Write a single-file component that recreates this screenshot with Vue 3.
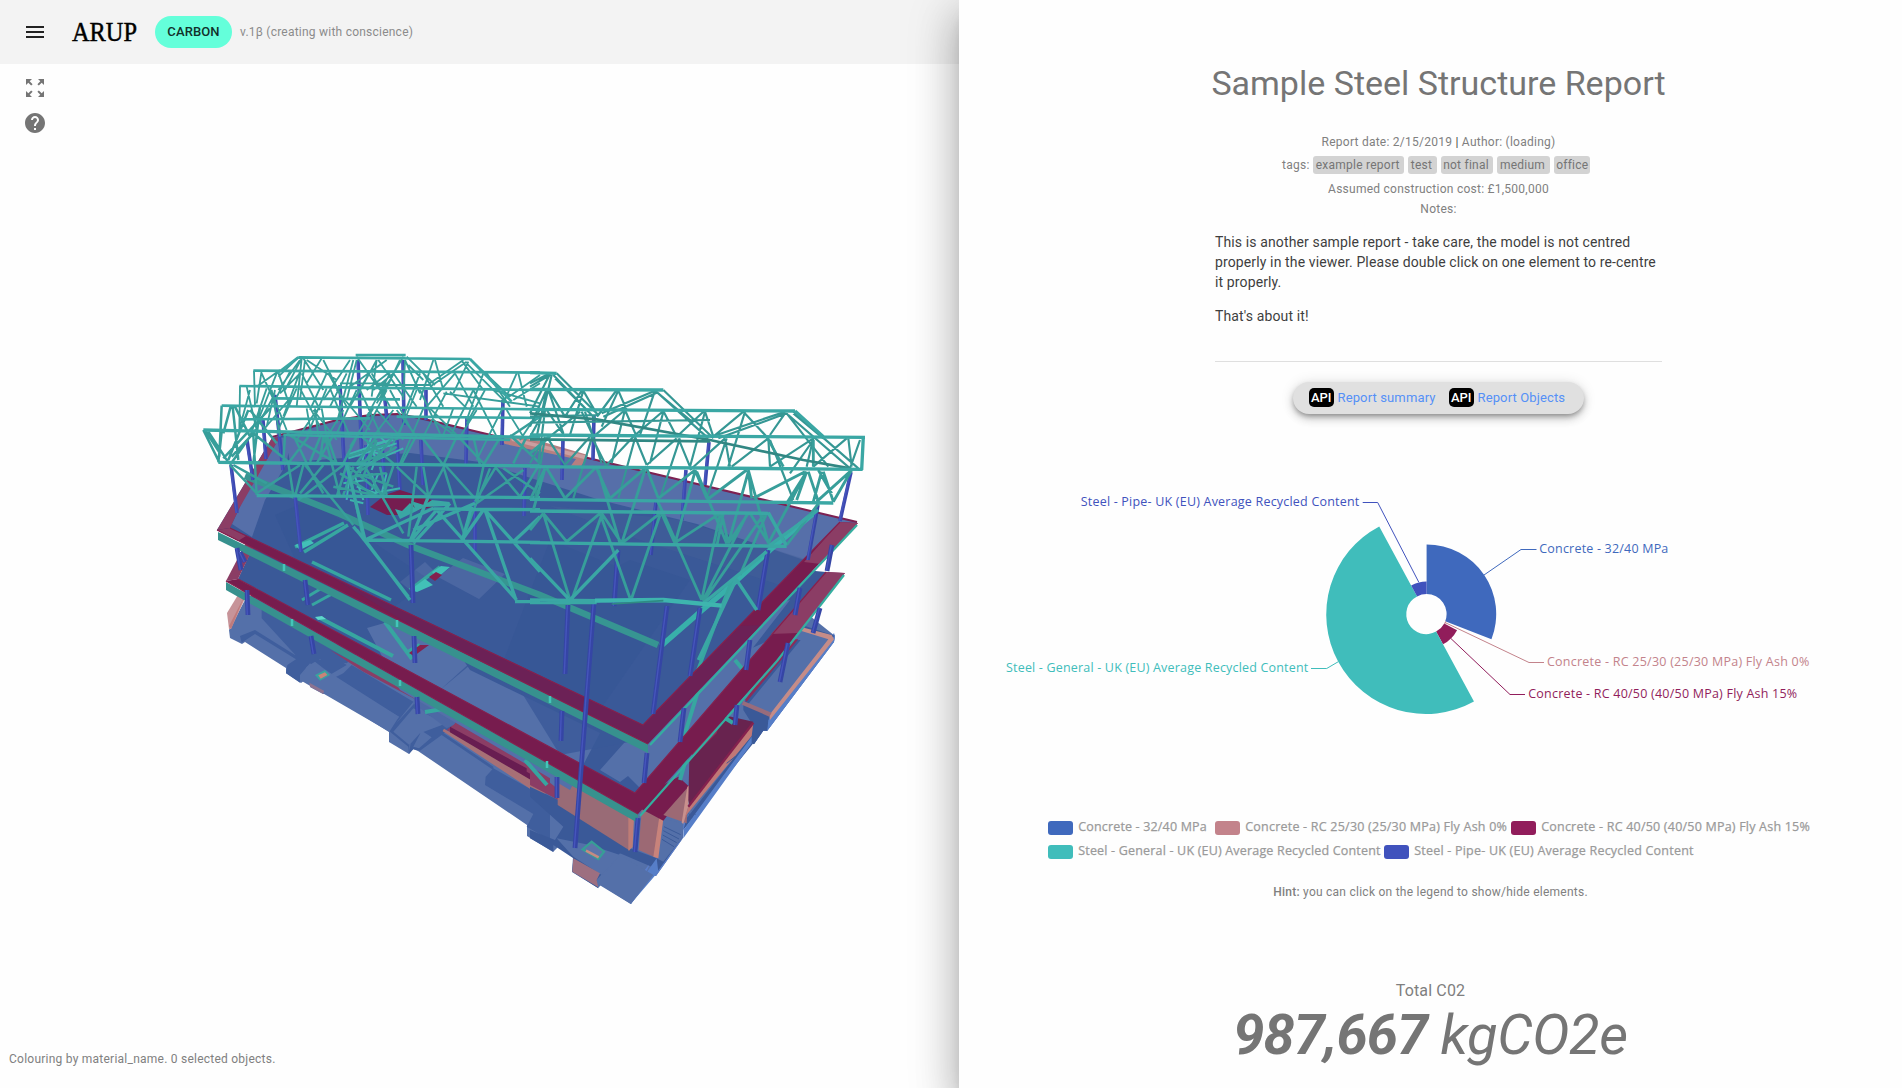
<script setup>
const cx = 1426.6
const cy = 614
const point = (r, deg) => {
  const a = (deg * Math.PI) / 180
  return `${(cx + r * Math.sin(a)).toFixed(2)} ${(cy - r * Math.cos(a)).toFixed(2)}`
}
const arc = (from, to, r) => {
  const large = to - from > 180 ? 1 : 0
  return `M${point(20, from)}L${point(r, from)}A${r} ${r} 0 ${large} 1 ${point(r, to)}L${point(20, to)}A20 20 0 ${large} 0 ${point(20, from)}Z`
}
const slices = [
  { name: 'Concrete - 32/40 MPa', color: '#3f69bd', from: 0, to: 111.3, r: 69.6, line: '1484,575 1521,549.5 1536.5,549.5', x: 1539.3, y: 553.3, w: 129, lx: 1048, ly: 821, lw: 128.5 },
  { name: 'Concrete - RC 25/30 (25/30 MPa) Fly Ash 0%', color: '#c3838b', from: 111.3, to: 118, r: 21, line: '1445,622.5 1529,662.5 1544,662.5', x: 1547, y: 666.3, w: 262.3, lx: 1215, ly: 821, lw: 261.7 },
  { name: 'Concrete - RC 40/50 (40/50 MPa) Fly Ash 15%', color: '#911d5b', from: 118, to: 151.6, r: 34.5, line: '1450.7,638.3 1510,694.5 1525,694.5', x: 1528.2, y: 698.3, w: 269, lx: 1511, ly: 821, lw: 268.6 },
  { name: 'Steel - General - UK (EU) Average Recycled Content', color: '#40bdbb', from: 151.6, to: 331.6, r: 99.6, line: '1338.3,661.7 1326.7,668.5 1311,668.5', x: 1006, y: 672.3, w: 302.3, lx: 1048, ly: 845, lw: 302.3 },
  { name: 'Steel - Pipe- UK (EU) Average Recycled Content', color: '#4052bd', from: 331.6, to: 360, r: 32.5, line: '1418.7,582 1377.7,502.5 1362.7,502.5', x: 1080.7, y: 506.3, w: 278.6, lx: 1384, ly: 845, lw: 279.3 }
]
const tags = ['example report', 'test', 'not final', 'medium', 'office']

// Truss members, far roof bays
const westThin = `M325 52L265 110M335 55L285 150M340 55L400 150M350 60L440 120M395 55L350 130M400 60L450 160M480 60L400 180M490 60L440 250M500 50L570 150M560 60L500 170M565 60L640 170M590 60L480 140M640 50L560 190M645 60L690 160M650 50L735 135M655 75L700 120M730 60L690 180M735 60L760 150M820 60L720 130M830 65L720 140M835 65L790 160M815 62L880 150M840 57L960 170M830 70L945 185M795 100L710 200M795 100L850 200M880 100L830 240M885 150L830 250M890 100L960 200M980 100L940 190M985 100L1010 200M1050 105L950 175M1050 130L970 180
M192 92L195 200M215 92L200 190M215 100L260 200M262 95L205 240M265 98L300 200M300 95L250 190M330 95L280 230M335 100L390 210M410 100L360 210M415 100L470 200M470 100L420 200M540 95L480 200M545 100L600 200M600 100L530 230M610 100L680 200M690 100L640 230M700 100L760 200
M150 138L148 270M170 140L200 270M180 150L150 260M230 145L180 290M240 145L290 270M255 150L230 260M320 145L260 280M330 145L390 260M410 145L350 290M420 145L480 290M500 150L440 280M510 150L570 280M590 150L520 290M600 150L670 280M680 150L620 300M690 150L750 280M770 155L700 290M850 150L780 290M850 150L920 290M940 200L860 360M950 210L1000 290M1050 210L990 300
M300 175L220 270M380 210L320 300M370 210L440 300M460 210L400 310M550 205L480 320M560 210L640 300M650 230L600 330M730 240L800 290M860 210L810 290M910 150L1050 190M760 160L1050 200
M335 55L320 200M345 60L330 180M200 140L270 90M265 150L330 60M500 60L470 180M545 170L560 60M575 175L630 60M640 180L645 60M450 130L590 130M480 145L560 145M560 135L720 135M255 160L185 290M245 150L270 290M270 160L330 100M350 205L365 290M375 205L385 290M395 205L410 290M440 150L540 270M530 150L600 95M550 150L610 100M600 120L560 175M610 210L550 290M620 210L680 290M700 205L630 370M720 205L800 285M780 155L830 205M790 205L760 285`
const westMid = `M95 197L88 350M122 200L100 280M128 200L145 360M135 200L180 290M175 210L115 360M180 210L260 310M210 200L190 370M40 270L88 367M55 275L115 367M95 275L85 367M45 270L90 340M190 275L120 375M190 280L125 350M190 285L200 465M190 280L295 365M240 205L100 355M285 285L280 365M290 280L440 370M310 285L350 370M355 290L295 370M395 280L360 365M410 285L440 370M430 285L380 370M500 290L460 370M515 290L610 370M560 290L500 370M610 290L545 370M680 285L635 370M690 285L760 375M800 290L760 375M805 290L885 375M850 290L870 375M935 285L880 375M960 285L1050 370M1010 290L970 370M1050 230L960 290
M120 375L205 465M130 375L230 430M295 370L310 465M330 375L200 460M340 375L315 470M345 375L490 555M350 375L400 460M400 375L330 460M460 375L325 480M470 375L440 470M475 380L520 600M470 375L580 465M490 380L460 465M525 380L640 580M570 380L590 465M610 378L580 465M620 380L715 470M680 380L655 590M700 380L715 470M765 375L715 470M765 375L850 470M760 380L825 590M880 380L860 470M915 385L855 485M915 380L990 470M900 385L820 590M1000 390L860 490M1050 370L990 470M940 385L1050 460
M400 290L390 360M405 290L450 470M590 340L500 370M600 310L470 350M620 320L500 400M560 300L520 410M550 330L480 430M450 400L560 470M480 410L590 400M500 400L610 440M430 440L580 470`
const westStair = 'M470 345L600 300M475 355L620 310M500 385L640 325M530 300L560 360M545 290L520 350M570 290L600 320M560 310L610 300M480 400L470 480M495 410L520 480M460 430L530 420M500 440L560 460M545 400L560 460M565 400L545 450M590 400L575 460M480 480L520 490M560 350L545 390M520 350L510 400M535 330L590 350M550 460L630 445'
const westHeavy = `M40 270L1050 293M85 367L1050 378M200 467L1050 473M730 507L1050 509M525 600L1050 607M470 375L525 600M740 510L660 605M730 505L525 600M780 490L670 610M740 510L980 780M880 510L820 595M885 510L978 780M885 510L970 605M1050 530L970 605M970 605L1050 695M525 600L660 780M490 560L525 600M855 490L670 570M975 785L1050 785M845 500L820 590M715 470L660 605M500 570L655 770`
const westChord = 'M325 52L840 57M497 45L647 45M497 54L647 54M190 92L1050 98M148 138L1050 150M95 197L1050 208M250 175L630 178M150 238L540 235M620 230L1050 234M280 285L960 300M325 52L262 100M840 57L965 185'

const eastThin = `M0 70L60 40M0 80L55 48M60 42L0 160M65 45L40 150M70 45L190 170M80 40L205 165M75 55L200 180M50 88L0 200M55 88L105 170M50 90L20 230M55 90L100 220M155 92L105 170M160 92L205 170M160 92L120 225M260 90L205 165M265 92L290 150M265 92L215 200M375 92L215 160M380 98L220 170M375 92L330 225M375 92L480 180M400 90L550 235M385 100L535 235
M45 150L0 230M50 150L105 230M45 150L25 310M150 155L60 230M155 155L190 230M165 155L215 310M285 150L190 230M285 150L320 230M285 150L245 310M400 153L310 230M400 153L440 230M400 155L360 310M520 155L440 230M525 155L550 230M525 155L480 320M640 155L550 230M640 155L710 230M645 155L595 320M765 155L560 225M770 160L565 235M765 160L720 225M770 160L895 320M790 155L985 325M775 165L960 325M790 160L880 235
M45 230L0 310M50 230L105 315M45 232L15 415M180 230L105 315M185 230L230 320M185 235L130 415M310 230L225 320M315 230L350 315M315 235L265 415M440 235L350 315M445 235L480 320M450 235L390 415M585 235L480 330M585 235L600 320M590 235L530 415M715 235L605 320M715 235L720 320M720 240L790 420M850 235L720 320M850 235L830 320M850 240L780 340M950 235L850 320M955 235L965 320M990 240L960 325M0 170L200 165M0 188L540 180`
const eastMid = `M45 325L0 420M50 325L105 415M45 325L10 450M195 325L105 415M200 325L240 415M205 330L270 550M345 325L240 415M350 325L385 415M345 330L275 550M495 330L385 415M495 330L530 415M495 335L435 550M500 335L590 550M650 330L530 420M655 330L665 415M655 335L595 550M655 330L715 550M825 335L670 415M830 335L800 420M835 335L865 425M850 240L850 320M875 335L850 425M880 335L910 425M965 330L910 425M960 335L860 425M830 335L715 550M830 335L770 430M865 330L905 400M380 418L400 460M870 425L770 555M0 280L60 230M710 230L760 320
M40 460L0 510M40 460L110 545M40 460L120 720M210 460L110 545M215 460L275 550M215 465L125 720M210 460L300 715M390 460L275 550M395 460L435 550M400 460L515 720M390 465L305 715M570 460L440 545M575 460L595 550M570 465L515 720M655 460L595 550M660 460L720 555M650 465L520 720M715 460L770 555M710 460L630 645M700 465L520 725M580 460L560 560`
const eastHeavy = 'M0 148L795 153M0 225L1005 232M0 320L998 328M0 418L910 429M0 453L715 460M0 548L770 559M0 88L400 90M0 38L80 40M795 153L885 235M1000 230L995 330M715 458L768 555M0 595L115 715M120 720L265 570M710 575L520 730M865 450L720 555M620 655L505 900M620 660L680 750M0 720L210 722M0 728L200 728'

const columns = [
  [231, 465, 237, 513], [247, 440, 253, 480], [263, 420, 266, 459], [275, 395, 283, 470], [295, 495, 301, 552], [340, 385, 344, 460], [358, 360, 362, 460], [403, 360, 404, 425], [385, 400, 387, 420],
  [346, 455, 347, 500], [366, 445, 368, 515], [382, 445, 385, 490], [397, 440, 400, 490], [421, 440, 423, 485], [426, 390, 426, 420], [467, 416, 466, 465], [503, 400, 502, 445], [525, 468, 524, 516], [475, 500, 475, 555],
  [237, 548, 241, 570], [240, 552, 245, 562], [247, 590, 248, 615], [305, 580, 308, 605],
  [563, 440, 562, 480], [594, 415, 593, 460], [709, 442, 705, 485], [686, 470, 682, 520], [656, 502, 651, 555], [618, 550, 614, 606], [851, 472, 840, 521], [818, 505, 808, 560], [768, 550, 758, 610],
  [411, 545, 413, 603], [311, 636, 314, 654], [414, 636, 415, 663], [417, 697, 418, 714], [568, 605, 565, 674], [562, 711, 561, 741], [667, 606, 653, 714], [700, 608, 690, 676],
  [832, 545, 827, 571], [800, 588, 795, 615], [820, 608, 813, 633], [750, 640, 746, 670], [788, 643, 780, 682], [737, 705, 735, 725], [684, 708, 680, 742], [647, 753, 644, 783], [557, 777, 557, 798], [638, 818, 635, 852], [594, 602, 575, 848]
]
</script>

<template>
  <div class="page">
    <section class="viewer">
      <header class="toolbar">
        <svg class="menu" width="24" height="24" viewBox="0 0 24 24"><path d="M3 18h18v-2H3v2zm0-5h18v-2H3v2zm0-7v2h18V6H3z" /></svg>
        <svg class="logo" width="68" height="40" viewBox="0 0 68 40">
          <text x="1" y="29.3" textLength="65" lengthAdjust="spacingAndGlyphs">ARUP</text>
        </svg>
        <span class="chip">CARBON</span>
        <span class="version">v.1β (creating with conscience)</span>
      </header>
      <nav class="tools">
        <svg width="24" height="24" viewBox="0 0 24 24"><path d="M15 3l2.3 2.3-2.89 2.87 1.42 1.42L18.7 6.7 21 9V3h-6zM3 9l2.3-2.3 2.87 2.89 1.42-1.42L6.7 5.3 9 3H3v6zm6 12l-2.3-2.3 2.89-2.87-1.42-1.42L5.3 17.3 3 15v6h6zm12-6l-2.3 2.3-2.87-2.89-1.42 1.42 2.89 2.87L15 21h6v-6z" /></svg>
        <svg width="24" height="24" viewBox="0 0 24 24"><path d="M12 2C6.48 2 2 6.48 2 12s4.48 10 10 10 10-4.48 10-10S17.52 2 12 2zm1 17h-2v-2h2v2zm2.07-7.75l-.9.92C13.45 12.9 13 13.5 13 15h-2v-.5c0-1.1.45-2.1 1.17-2.83l1.24-1.26c.37-.36.59-.86.59-1.41 0-1.1-.9-2-2-2s-2 .9-2 2H8c0-2.21 1.79-4 4-4s4 1.79 4 4c0 .88-.36 1.68-.93 2.25z" /></svg>
      </nav>

      <svg class="model" width="959" height="870" viewBox="0 154 959 870">
        <!-- foundation slab -->
        <path fill="#5470a9" d="M229 630L245 600 300 560 600 540 790 600 835 636 834 642 767 731 763 731 754 744 752 743 683 830 683 838 656 876 653 875 631 904 601 885 598 888 572 872 573 857 558 847 553 852 527 836 527 825 418 751 413 749 409 754 389 742 389 732 328 694 323 694 310 687 310 683 305 680 301 683 286 673 286 668 245 642 242 644 230 638Z" />
        <path fill="#5b7ec8" d="M631 904L653 875 653 868 683 838 683 824 733 765 768 718 834 633 835 636 834 642 767 731 763 731 754 744 752 743 683 830 683 838 656 876 653 875 631 904 629 890 651 862Z" />
        <g transform="translate(200 600) scale(.33333)">
          <path fill="#3f5e9d" d="M185 30L230 35 400 140 520 60 540 100 440 190 310 170 300 180 185 55ZM120 108L165 90 285 165 320 155 360 180 395 165 440 195 380 230 330 190 300 225 300 248 258 220 262 195 288 178 165 102 125 128ZM430 220L455 195 640 305 568 395 568 385 597 350 400 235ZM570 390L645 308 660 340 740 350 760 380 660 450 700 410 665 390 628 435 627 460 632 430 662 388 700 408 725 395 880 500 880 510 725 405 660 452 640 448 627 462 625 440 600 420 570 395ZM880 505L1050 600 1050 720 980 680 1000 642 855 555 857 530ZM690 250L860 160 1050 0 1050 110 880 220 800 270 780 290Z" />
          <path fill="#5470a9" d="M320 200L345 185 370 205 400 225 597 350 568 395 300 240ZM640 440L665 392 695 412 657 445ZM580 395L640 325 740 370 660 400 628 435Z" />
          <path d="M345 225L375 210 390 225 360 242Z" fill="#37a39f" /><path d="M355 226L375 217 382 225 362 236Z" fill="#c98379" />
          <path d="M328 248L372 272 370 282 330 260Z" fill="#8c7391" />
          <path d="M390 150L500 205 1050 530 1050 570 740 390 765 370 650 300 490 215Z" fill="#8b3d65" />
          <path d="M650 260L790 340 760 375 740 385 640 310Z" fill="#4d69a5" />
          <path d="M750 380L980 505 980 515 1050 555 1040 570 990 545 750 400Z" fill="#681d51" />
          <path d="M730 390L1035 570 1030 588Z" fill="#a77076" stroke="#a77076" stroke-width="8" />
        </g>
        <g transform="translate(530 600) scale(.33333)">
          <path fill="#3a5998" d="M0 560L85 600 300 745 380 775 460 690 455 715 375 825 365 800 270 760 200 840 205 865 127 815 130 775 70 735 70 755 0 715 0 690 75 720 100 680 0 590ZM640 310L720 345 712 392 700 392 672 433 665 430 665 370 640 330ZM470 655L665 405 668 432 460 690ZM700 40L800 70 914 107 910 112 820 90 700 60ZM640 310L800 120 812 120 650 318Z" />
          <path fill="#567ec8" d="M715 360L905 118 914 107 912 125 712 392ZM460 690L665 410 665 430 460 715ZM302 885L380 775 385 815 302 912Z" />
          <path fill="#5470a9" d="M270 765L370 825 302 912 200 850ZM80 715L180 735 270 765 215 825 130 770Z" />
          <path fill="#5470a9" d="M385 690L400 655 460 672 458 712 400 785 380 775Z" />
          <path fill="#c58c88" d="M790 75L905 105 912 118 720 360 718 345 895 118 795 87Z" /><path fill="#986c7c" d="M640 303L725 338 718 350 636 314Z" />
          <path fill="#8b3d65" d="M0 500L75 560 85 600 0 555Z" />
          <path fill="#996b76" d="M83 535L305 650 300 752 83 615Z" /><path fill="#bd7c76" d="M295 645L312 655 308 742 295 752Z" />
          <path fill="#9c6974" d="M335 630L400 655 382 775 326 750Z" /><path fill="#c8837b" d="M388 650L400 655 385 775 370 770Z" />
          <path fill="#771c4e" d="M390 560L445 530 478 560 400 662 330 625Z" />
          <path fill="#9c6974" d="M475 560L470 670 400 645Z" /><path fill="#c8908d" d="M472 560L480 556 475 620 460 672 455 668Z" />
          <path fill="#68234f" d="M475 600L478 480 580 345 670 365 665 385 480 625Z" /><path fill="#c07876" d="M670 368L665 408 465 650 475 620Z" /><path d="M670 368L475 620" stroke="#84214e" stroke-width="7" />
          <path fill="#8d2b57" d="M645 300L780 118 805 118 650 305ZM480 450L580 345 560 400 490 470Z" />
          <path d="M130 775L210 820 200 840 205 862 127 815Z" fill="#9d6f80" />
          <path d="M158 748L185 725 222 755 205 777Z" fill="#5d75aa" stroke="#379e96" stroke-width="7" /><path d="M168 752L206 772" stroke="#c68b82" stroke-width="8" />
          <g stroke="#3a5998" stroke-width="3"><path d="M398 705L440 728M400 692L447 717M402 680L452 704M396 718L432 740M476 640L486 652M486 632L496 644M590 490L615 470M240 730L270 760" /></g>
        </g>

        <!-- lower floor -->
        <path fill="#3a5998" d="M238 579L275 500 440 540 700 560 826 572 635 793Z" />
        <path fill="#5470a9" d="M367 628L430 610 470 670 600 733 570 790 400 690ZM600 770L680 680 770 640 700 720 640 788 628 776 620 782ZM660 680L710 620 790 600 720 690Z" />
        <path fill="#3a5998" d="M440 690L600 545 690 600 640 740 560 755 520 690 470 665Z" opacity=".8" />
        <path fill="#8b3d65" d="M226 581L250 535 257 540 238 579Z" />
        <path fill="#c79499" d="M227 613L244 585 248 592 231 629 229 629Z" />
        <path fill="#c07b7c" d="M243 599L247 590 231 629 229 626Z" />
        <path fill="none" stroke="#37a6a0" stroke-width="4" d="M320 618L393 656M408 652L420 645M385 622L412 659M425 712L443 709M525 760L547 785M735 660L744 671M725 718L733 723M703 675L683 740M690 745L680 780" />
        <path fill="none" stroke="#37a6a0" stroke-width="3" d="M302 600L322 588M312 605L332 594" />
        <path fill="#5dd7cb" d="M315 617L322 616 326 619 318 620Z" /><path fill="#84214e" d="M409 653L420 645 429 645 414 656Z" />
        <path fill="#771c4e" d="M226 581L238 579 635 793 826 572 845 573 777 660 638 814Z" />
        <path fill="#8b3d65" d="M826 572L845 573 798 633 771 634Z" />
        <path fill="#37918e" d="M226 582L638 814 638 823 226 590Z" />
        <path stroke="#35aea0" stroke-width="2.2" fill="none" d="M640 816L777 661 844 575" />
        <path stroke="#84214e" stroke-width="1.2" fill="none" d="M226 581L638 814M238 579L635 793 826 572" />

        <!-- upper floor -->
        <path fill="#3a5998" d="M217 530L272 438 337 420 370 415 397 414 420 418 857 522 648 742Z" />
        <path fill="#566fa9" d="M232 524L272 438 290 437 287 463 265 500 252 537ZM285 437L337 420 397 414 857 522 810 562 697 524 600 500 480 462 410 453 290 462Z" />
        <path fill="#476199" d="M550 506L680 520 808 560 780 585 640 540Z" opacity=".4" />
        <path fill="#4e68a3" d="M438 577L463 558 505 574 479 599ZM400 582L425 562 433 570 410 590Z" opacity=".9" />
        <path fill="#2f4e8e" opacity=".18" d="M550 540L650 580 560 690 500 670ZM275 515L310 500 430 580 390 610 300 570ZM570 590L630 560 690 580 600 710 560 690Z" />
        <path fill="#751d50" d="M370 507L385 495 400 490 438 502 432 507 398 515 387 515Z" />
        <path stroke="#7d2152" stroke-width="2" fill="none" d="M272 437L337 420 370 415 397 414 420 418 857 522" />
        <g fill="#b77f80"><path d="M500 440L510 436 540 441 588 455 580 468 570 467 576 459 505 444Z" /><path fill="#cb9fa1" d="M510 437L588 456 584 459 512 441Z" /></g>
        <path fill="#8b3d65" d="M217 530L272 438 280 437 240 507 230 528Z" />
        <path fill="none" stroke="#379592" stroke-width="6.5" d="M245 476L275 488 340 514 408 545 540 595 658 645" />
        <path fill="none" stroke="#38b0aa" stroke-width="5.5" d="M661 646L700 612 725 591 770 550 815 512" />
        <path fill="none" stroke="#37a6a0" stroke-width="3.5" d="M295 547L344 523M304 552L348 525M312 562L391 600M410 590L440 567M696 675L732 580" />
        <path fill="#42c0b7" d="M410 590L425 579 433 585 417 592ZM432 572L441 566 450 567 437 578ZM295 545L310 540 314 543 300 550Z" />
        <path fill="#3aa7a4" d="M395 509L402 511 410 503 415 508 411 501 424 505 432 500 450 502 447 506 425 507 400 519Z" />
        <path fill="#84214e" d="M429 577L436 572 442 575 435 581Z" />
        <path fill="#771c4e" d="M217 530L230 528 643 725 840 522 858 523 648 744Z" />
        <path fill="#68245a" opacity=".7" d="M330 576L430 623 643 725 740 626 760 625 648 743 430 637Z" />
        <path fill="#8b3d65" d="M217 530L230 528 246 536 238 541ZM840 522L858 523 821 564 804 562Z" />
        <path fill="#37918e" d="M218 532L648 744 648 753 218 540Z" />
        <path stroke="#35aea0" stroke-width="2.2" fill="none" d="M650 745L857 525" />
        <path stroke="#84214e" stroke-width="1.2" fill="none" d="M217 530L648 744M230 528L643 725 840 522" />
        <path stroke="#43c6b9" stroke-width="2.5" d="M284 564V571M397 620V627M550 696V703M400 680V686M292 619V626M547 761V768" />

        <!-- columns -->
        <line v-for="(c, i) in columns" :key="i" :x1="c[0]" :y1="c[1]" :x2="c[2]" :y2="c[3]" :stroke="c[1] > 500 ? '#3545a5' : '#3c48b0'" :stroke-width="c[1] > 540 ? 4.8 : 3.6" />
        <line v-for="(c, i) in columns" :key="'h' + i" :x1="c[0] - 0.7" :y1="c[1]" :x2="c[2] - 0.7" :y2="c[3]" stroke="#4655bc" stroke-width="1.4" />

        <!-- roof trusses -->
        <g fill="none" stroke-linejoin="round">
          <g transform="translate(190 340) scale(.33333)">
            <path :d="westThin" stroke="#379e9a" stroke-width="5.5" />
            <path :d="westStair" stroke="#3eb5ae" stroke-width="6" />
            <path :d="westMid" stroke="#379e9a" stroke-width="7.5" />
            <path :d="westChord" stroke="#3aa7a4" stroke-width="8" />
            <path :d="westHeavy" stroke="#3aa7a4" stroke-width="10" />
          </g>
          <g transform="translate(530 360) scale(.33333)">
            <path :d="eastThin" stroke="#359794" stroke-width="6.5" />
            <path :d="eastMid" stroke="#379e9a" stroke-width="8.5" />
            <path d="M0 160L200 178 540 240 820 300 960 325M0 238L540 244" stroke="#318783" stroke-width="8" />
            <path :d="eastHeavy" stroke="#3aa7a4" stroke-width="10" />
            <path d="M195 722L400 720 575 737" stroke="#3eb5ae" stroke-width="13" />
            <path d="M245 732L400 722" stroke="#2f8b83" stroke-width="5" />
          </g>
        </g>
      </svg>
      <footer class="status">Colouring by material_name. 0 selected objects.</footer>
    </section>

    <main class="report">
      <div class="intro">
        <h1>Sample Steel Structure Report</h1>
        <p class="caption date">Report date: 2/15/2019 <b>|</b> Author: (loading)</p>
        <p class="caption tags">tags:<span v-for="t in tags" :key="t" class="tag">{{ t }}</span></p>
        <p class="caption">Assumed construction cost: £1,500,000</p>
        <p class="caption">Notes:</p>
        <div class="notes">
          <p>This is another sample report - take care, the model is not centred<br>properly in the viewer. Please double click on one element to re-centre<br>it properly.</p>
          <p>That's about it!</p>
        </div>
        <hr>
        <div class="api">
          <span class="badge">API</span><a class="first">Report summary</a>
          <span class="badge">API</span><a>Report Objects</a>
        </div>
      </div>

      <svg class="chart" width="943" height="440" viewBox="959 440 943 440">
        <g v-for="s in slices" :key="s.name">
          <path :d="arc(s.from, s.to, s.r)" :fill="s.color" />
          <polyline :points="s.line" fill="none" :stroke="s.color" />
          <text :x="s.x" :y="s.y" :textLength="s.w" :fill="s.color">{{ s.name }}</text>
          <rect :x="s.lx" :y="s.ly" width="25" height="14" rx="3" :fill="s.color" />
          <text class="legend" :x="s.lx + 30.2" :y="s.ly + 10.3" :textLength="s.lw">{{ s.name }}</text>
        </g>
      </svg>
      <p class="caption hint"><b>Hint:</b> you can click on the legend to show/hide elements.</p>
      <p class="total-label">Total C02</p>
      <p class="total"><b>987,667</b> kgCO2e</p>
    </main>
  </div>
</template>

<style>
body { background: #fefefe; overflow: hidden; }
</style>

<style scoped>
.page { display: flex; width: 1902px; height: 1088px; overflow: hidden; font-family: Roboto, "Liberation Sans", sans-serif; background: #fefefe; color: #212121; }
p, h1 { margin: 0; }
.viewer { width: 959px; height: 1088px; display: flex; flex-direction: column; }
.toolbar { height: 64px; flex: none; display: flex; align-items: center; background: #f3f3f3; }
.menu { margin-left: 23px; fill: #212121; }
.logo { margin-left: 24px; overflow: visible; }
.logo text { font: 28px "Liberation Serif", serif; fill: #000; stroke: #000; stroke-width: .5px; }
.chip { margin-left: 16px; width: 77px; height: 32px; border-radius: 16px; background: #64ffda; font-size: 13px; font-weight: 500; line-height: 32px; text-align: center; color: #12302a; letter-spacing: .1px; }
.version { margin-left: 8px; font-size: 12px; letter-spacing: .23px; color: #8b8b8b; }
.tools { height: 90px; flex: none; box-sizing: border-box; padding: 12px 0 0 23px; display: flex; flex-direction: column; gap: 11px; fill: #757575; }
.model { flex: none; display: block; }
.status { padding-left: 9px; margin-top: 25px; font-size: 12px; line-height: 20px; letter-spacing: .24px; color: #808080; }
.report { width: 943px; height: 1088px; background: #fefefe; box-shadow: 0 11px 15px -7px rgba(0,0,0,.2), 0 24px 38px 3px rgba(0,0,0,.2), 0 9px 46px 8px rgba(0,0,0,.12); position: relative; }
.intro { width: 471px; margin-left: 244px; padding-top: 63px; text-align: center; height: 377px; }
h1 { font-size: 34px; font-weight: 400; line-height: 40px; white-space: nowrap; color: #757575; }
.caption { font-size: 12px; line-height: 20px; letter-spacing: .25px; color: #808080; white-space: nowrap; }
.date { margin-top: 29px; }
.date b { color: #444; font-weight: 400; }
.tags { display: flex; justify-content: center; align-items: center; height: 20px; margin: 3px 5px 4px 0; }
.tag { height: 18px; line-height: 18px; margin-left: 4px; padding: 0 4.5px 0 2.5px; border-radius: 3px; background: #d3d3d3; color: #757575; }
.tag:first-of-type { margin-left: 3.5px; }
.tag:last-child { padding-right: 1.5px; }
.notes { padding: 13px 12px 0; text-align: left; font-size: 14px; line-height: 20px; letter-spacing: .125px; white-space: nowrap; color: #3e3e3e; }
.notes p + p { margin-top: 14px; }
hr { border: 0; height: 1px; background: #dfdfdf; margin: 35px 12px 20px; }
.api { width: 291px; height: 32px; box-sizing: border-box; margin: 0 auto; padding-left: 16px; border-radius: 16px; display: flex; align-items: center; background: #e0e0e0; box-shadow: 0 3px 5px -1px rgba(0,0,0,.3), 0 5px 10px rgba(0,0,0,.16), 0 1px 14px rgba(0,0,0,.12); font-size: 13px; white-space: nowrap; }
.badge { width: 24.5px; height: 19px; margin-top: -1px; border-radius: 5px; background: #000; color: #fff; font-weight: 500; line-height: 19px; text-align: center; }
.api a { margin-left: 4px; color: #5590f7; letter-spacing: .13px; margin-top: -1px; }
.api .first { width: 98px; margin-right: 13.5px; }
.chart { display: block; }
.chart text { font: 12.5px "Open Sans", "Noto Sans", sans-serif; }
.chart .legend { fill: #9a9a9a; stroke: #9a9a9a; stroke-width: .25px; }
.hint { margin-top: 2px; text-align: center; }
.hint b { font-weight: 500; }
.total-label { margin-top: 77px; font-size: 16px; line-height: 24px; text-align: center; letter-spacing: .15px; color: #7f7f7f; }
.total { text-align: center; font-size: 56px; line-height: 64px; font-style: italic; color: #757575; letter-spacing: -.4px; }
.total b { font-weight: 700; letter-spacing: -.95px; }
</style>
